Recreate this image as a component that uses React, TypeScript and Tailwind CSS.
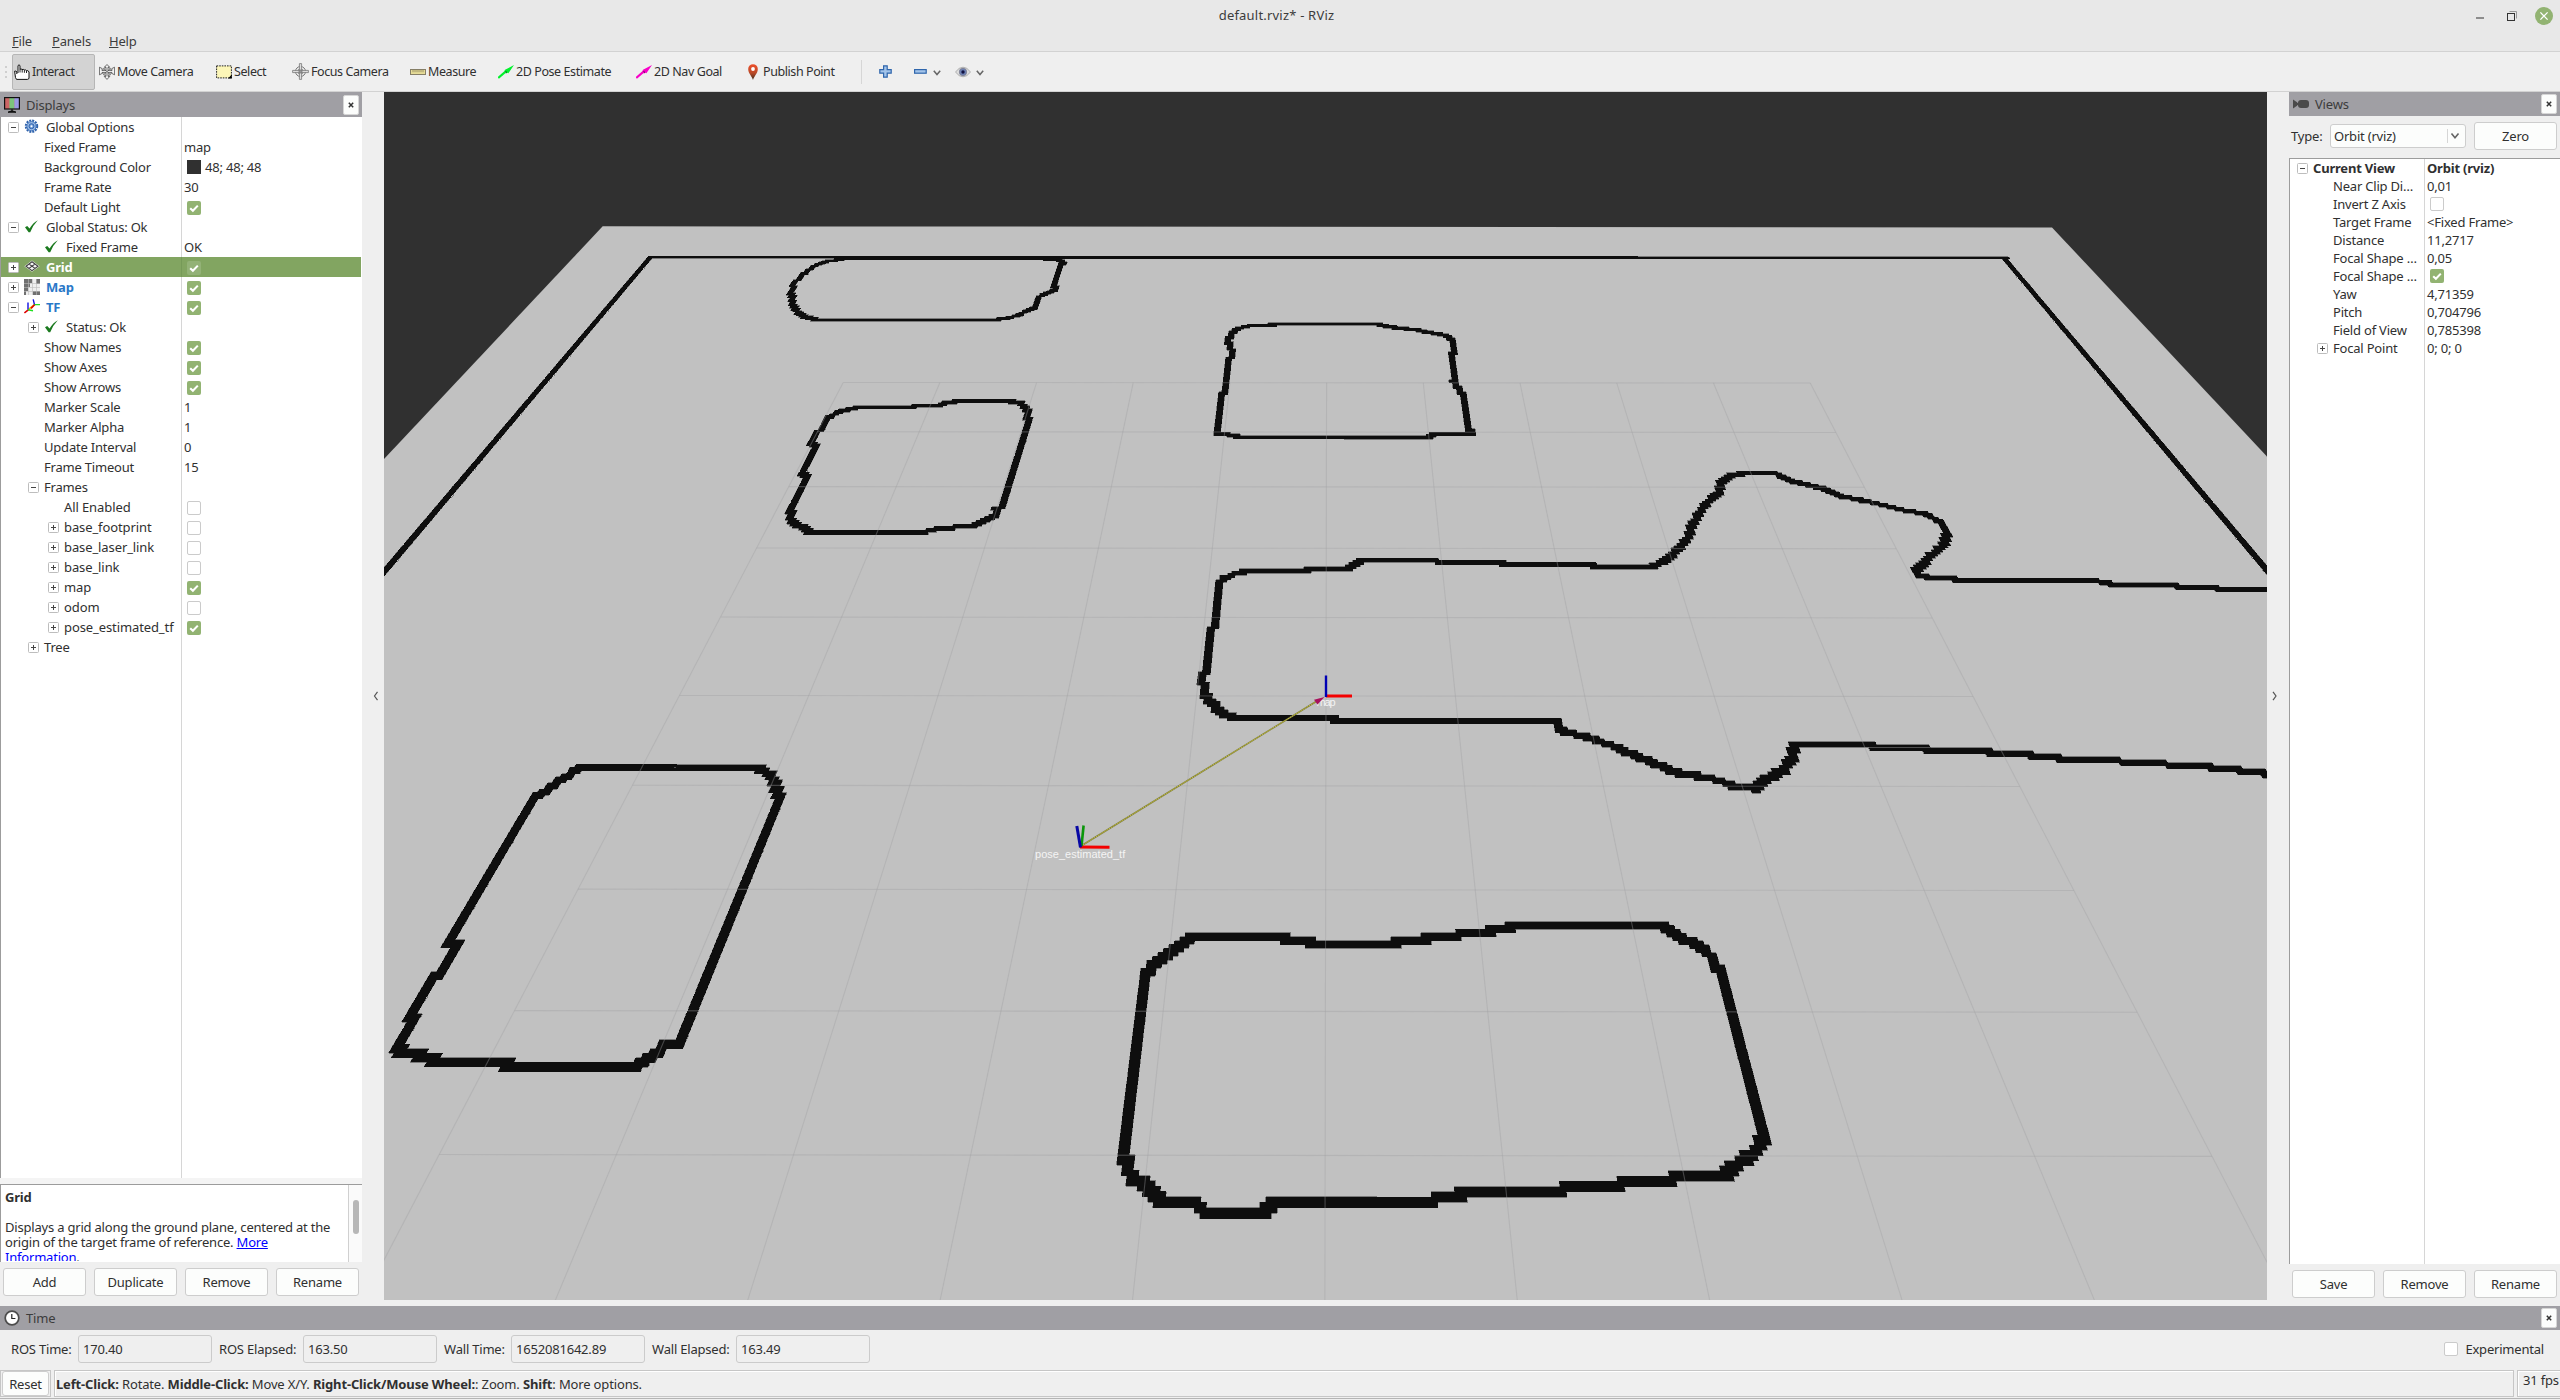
import React from "react";

type Pt = [number, number];

/* ---------- 3D scene ---------- */

const DIST = 11.2717;
const SIN = 0.6479;
const COS = 0.7617;
const FOCAL = 1458.2;
const YAW = 0.0012;
const CX = 1326;
const CY = 696;
const CELL = 0.0325;

function project(x: number, y: number): Pt {
  const yr = y - YAW * x;
  const xr = x + YAW * y;
  const z = DIST + COS * yr;
  return [CX + (FOCAL * xr) / z, CY - (FOCAL * SIN * yr) / z];
}

function unproject(px: number, py: number): Pt {
  const k = (CY - py) / FOCAL;
  const yr = (k * DIST) / (SIN - k * COS);
  const xr = ((px - CX) * (DIST + COS * yr)) / FOCAL;
  return [xr - YAW * yr, yr + YAW * xr];
}

interface Wall {
  o: Pt;
  s: Pt;
  pts: Pt[];
  plumb?: boolean;
}

const S7: Pt = [2.1778, 3];
const S8: Pt = [1.3067, 2.45];
const S11: Pt = [2.0632, 3];

const walls: Wall[] = [
  { o: [380, 210], s: S7, pts: [[587, 141], [3540, 142.5]] },
  { o: [380, 210], s: S7, pts: [[298, 612], [587, 141], [-40, 1163]], plumb: true },
  { o: [1100, 210], s: S8, pts: [[1354, 501], [1183, 117], [1560, 964]], plumb: true },
  {
    o: [380, 210],
    s: S7,
    pts: [[1003, 149], [975, 153], [945, 168], [920, 195], [905, 215], [893, 248], [898, 265], [897, 280], [905, 300], [922, 318], [955, 330], [1325, 330], [1365, 326], [1395, 312], [1425, 292], [1433, 262], [1468, 240], [1475, 200], [1478, 180], [1487, 160], [1480, 150], [1440, 146], [1003, 146]],
  },
  {
    o: [380, 210],
    s: S7,
    pts: [[1040, 593], [1160, 592], [1165, 588], [1215, 586], [1235, 578], [1262, 573], [1370, 573], [1395, 580], [1408, 595], [1411, 615], [1411, 640], [1355, 890], [1342, 895], [1338, 918], [1310, 938], [1285, 950], [1220, 954], [1190, 965], [1150, 970], [945, 970], [920, 953], [903, 940], [893, 925], [895, 900], [928, 800], [918, 790], [948, 705], [938, 700], [955, 665], [975, 625], [1000, 605], [1040, 593]],
  },
  {
    o: [1100, 210],
    s: S8,
    pts: [[225, 281], [365, 281], [375, 286], [415, 294], [440, 303], [455, 310], [463, 325], [463, 345], [460, 355], [462, 420], [470, 440], [478, 470], [481, 520], [485, 548], [435, 549], [430, 556], [180, 556], [175, 552], [155, 548], [165, 385], [173, 350], [168, 325], [170, 305], [180, 290], [195, 284], [225, 284]],
  },
  {
    o: [1100, 210],
    s: S8,
    pts: [[1560, 933], [1470, 932], [1450, 922], [1335, 921], [1305, 910], [1130, 908], [1105, 902], [1068, 898], [1065, 888], [1075, 868], [1085, 848], [1100, 825], [1107, 800], [1098, 765], [1080, 745], [1045, 733], [1005, 715], [970, 702], [940, 680], [905, 665], [880, 643], [845, 643], [825, 650], [812, 665], [808, 695], [790, 722], [780, 755], [772, 780], [768, 805], [755, 830], [745, 850], [728, 868], [715, 877], [648, 877], [645, 871], [530, 869], [525, 864], [445, 863], [440, 860], [340, 860], [320, 881], [210, 883], [180, 888], [160, 905], [153, 925], [153, 1010], [147, 1025], [141, 1120], [136, 1135], [134, 1180], [145, 1205], [160, 1235], [175, 1244], [303, 1244], [310, 1251], [598, 1251], [600, 1272], [640, 1295], [665, 1310], [710, 1345], [755, 1380], [800, 1392], [830, 1412], [855, 1418], [870, 1395], [895, 1370], [905, 1345], [908, 1308], [965, 1309], [1045, 1317], [1125, 1325], [1205, 1331], [1235, 1341], [1285, 1346], [1365, 1353], [1420, 1362], [1475, 1368], [1505, 1378], [1560, 1386]],
  },
  {
    o: [380, 740],
    s: [3, 3],
    pts: [[600, 81], [1130, 81], [1150, 90], [1170, 105], [1185, 125], [1190, 145], [1198, 168], [893, 918], [855, 917], [830, 938], [800, 955], [770, 975], [750, 983], [400, 983], [380, 970], [170, 970], [150, 950], [90, 942], [52, 930], [106, 837], [93, 837], [224, 616], [205, 616], [470, 165], [495, 155], [515, 140], [535, 122], [560, 108], [580, 92], [600, 81]],
  },
  {
    o: [1080, 900],
    s: S11,
    pts: [[230, 114], [445, 116], [450, 127], [497, 128], [500, 138], [650, 138], [655, 127], [705, 126], [715, 115], [745, 105], [845, 104], [850, 93], [885, 90], [890, 81], [1205, 81], [1220, 98], [1240, 115], [1270, 130], [1290, 150], [1305, 175], [1315, 205], [1328, 225], [1411, 690], [1410, 715], [1403, 738], [1390, 760], [1370, 780], [1345, 805], [1325, 829], [1225, 830], [1220, 844], [1120, 845], [1110, 859], [1000, 861], [990, 875], [785, 877], [775, 892], [735, 893], [725, 907], [400, 908], [390, 925], [375, 940], [260, 941], [250, 925], [235, 908], [165, 908], [155, 890], [140, 860], [130, 845], [110, 840], [97, 800], [92, 770], [138, 230], [145, 205], [165, 180], [185, 155], [210, 132], [230, 114]],
  },
];

/* Rasterises wall centrelines into occupied cells and merges each row into quads. */
function occupiedPath(): string {
  const rows = new Map<number, Set<number>>();
  const mark = (c: number, r: number) => {
    if (!rows.has(r)) rows.set(r, new Set());
    rows.get(r)!.add(c);
  };
  for (const w of walls) {
    const g = w.pts.map(([a, b]) => unproject(w.o[0] + a / w.s[0], w.o[1] + b / w.s[1]));
    if (w.plumb) g.forEach((p) => (p[0] = g[0][0]));
    for (let i = 1; i < g.length; i++) {
      const [x0, y0] = g[i - 1];
      const [x1, y1] = g[i];
      const n = Math.max(1, Math.ceil(Math.hypot(x1 - x0, y1 - y0) / (CELL / 3)));
      for (let k = 0; k <= n; k++) {
        const c = Math.round((x0 + ((x1 - x0) * k) / n) / CELL);
        const r = Math.round((y0 + ((y1 - y0) * k) / n) / CELL);
        mark(c, r);
        mark(c - 1, r);
        mark(c, r - 1);
        mark(c - 1, r - 1);
      }
    }
  }
  const f = (p: Pt) => p[0].toFixed(1) + " " + p[1].toFixed(1);
  let d = "";
  rows.forEach((set, r) => {
    const cs = Array.from(set).sort((a, b) => a - b);
    let start = cs[0];
    for (let i = 0; i < cs.length; i++) {
      if (cs[i + 1] !== cs[i] + 1) {
        const x0 = start * CELL;
        const x1 = (cs[i] + 1) * CELL;
        const y0 = r * CELL;
        const y1 = y0 + CELL;
        d += `M${f(project(x0, y0))}L${f(project(x1, y0))}L${f(project(x1, y1))}L${f(project(x0, y1))}Z`;
        start = cs[i + 1];
      }
    }
  });
  return d;
}

const wallPath = occupiedPath();

const gridLines = Array.from({ length: 11 }, (_, i) => i - 5).flatMap((v) => [
  [project(v, -5), project(v, 5)],
  [project(-5, v), project(5, v)],
]);

function Scene() {
  return (
    <svg viewBox="384 92 1883 1208" className="block h-[1208px] w-[1883px] shrink-0 bg-[#303030]">
      <polygon points="384,459 602.7,226.3 2052,227.4 2267,456.5 2267,1300 384,1300" fill="#c1c1c1" />
      <path d={wallPath} fill="#0e0e0e" stroke="#0e0e0e" strokeWidth="0.4" shapeRendering="crispEdges" />
      <g stroke="#a0a0a4" strokeOpacity="0.38" strokeWidth="1.1">
        {gridLines.map(([a, b], i) => (
          <line key={i} x1={a[0]} y1={a[1]} x2={b[0]} y2={b[1]} />
        ))}
      </g>
      <line x1="1081" y1="846" x2="1317" y2="701" stroke="#7d7c3c" strokeWidth="1.6" />
      <line x1="1081" y1="846" x2="1317" y2="701" stroke="#c8c23c" strokeWidth="1" strokeDasharray="1.5 1" />
      <g fontFamily="Liberation Sans, sans-serif" fontSize="11" fill="#f4f4f4">
        <text x="1316.5" y="706" textLength="19">map</text>
        <text x="1035" y="858" textLength="90">pose_estimated_tf</text>
      </g>
      <path d="M1324.5 697L1314 699.8L1317.5 704.6Z" fill="#a8125c" />
      <g strokeWidth="3">
        <path d="M1326 696H1352" stroke="#f40000" />
        <path d="M1326 697V675.5" stroke="#0000b4" strokeWidth="2.4" />
        <path d="M1080 847L1109.5 847.3" stroke="#f40000" />
        <path d="M1081.5 846L1083.6 825.5" stroke="#0a960a" strokeWidth="2.6" />
        <path d="M1080.5 847.5L1076.8 826" stroke="#0808a4" />
      </g>
    </svg>
  );
}

/* ---------- small controls ---------- */

function Check({ on, dim }: { on: boolean; dim?: boolean }) {
  if (!on) return <span className="h-[14px] w-[14px] rounded-[2px] border border-[#cbcbcb] bg-white" />;
  return (
    <span className={`flex h-[14px] w-[14px] items-center justify-center rounded-[2px] ${dim ? "bg-[#93b277]" : "bg-[#92b372]"}`}>
      <svg viewBox="0 0 14 14" className="h-[14px] w-[14px]">
        <path d="M3.2 7.2L5.9 9.8L10.8 4.6" fill="none" stroke="#fff" strokeWidth="2.1" />
      </svg>
    </span>
  );
}

function Expander({ open }: { open: boolean }) {
  return (
    <span className="flex h-[11px] w-[11px] items-center justify-center rounded-[1.5px] border border-[#bdbdbd] bg-white">
      <svg viewBox="0 0 9 9" className="h-[9px] w-[9px]" shapeRendering="crispEdges">
        <path d={open ? "M2 4.5H7" : "M2 4.5H7M4.5 2V7"} stroke="#444" strokeWidth="1" />
      </svg>
    </span>
  );
}

function PushButton({ children, className = "" }: { children: React.ReactNode; className?: string }) {
  return (
    <button className={`flex h-7 w-[83px] items-center justify-center rounded-[3px] border border-[#cdcdcd] bg-[#fcfdfc] ${className}`}>
      {children}
    </button>
  );
}

function CloseButton() {
  return (
    <button className="ml-auto mr-[3px] flex h-5 w-4 items-center justify-center rounded-[2px] border border-[#d6d6d6] bg-[#fcfdfc]">
      <svg viewBox="0 0 6 6" className="h-[6px] w-[6px]">
        <path d="M0.8 0.8L5.2 5.2M5.2 0.8L0.8 5.2" stroke="#333" strokeWidth="1.5" />
      </svg>
    </button>
  );
}

function Chevron({ className = "" }: { className?: string }) {
  return (
    <svg viewBox="0 0 8 6" className={`h-[6px] w-[8px] ${className}`}>
      <path d="M0.8 0.8L4 4.6L7.2 0.8" fill="none" stroke="#666" strokeWidth="1.5" />
    </svg>
  );
}

/* ---------- icons ---------- */

const ic = "h-4 w-4 shrink-0";

const HandIcon = () => (
  <svg viewBox="0 0 16 16" className={ic}>
    <path d="M4 9V1.6Q5 0 6 1.6V5.2Q7.2 4.4 8 5.6Q9.4 4.8 10.2 6Q11.6 5.4 12.3 6.6Q14 6.2 15 7.8V14.5L13.5 15.4H2.5L1.5 13.5L0.6 7.2Q2.2 6.4 2.8 8V10" fill="#fff" stroke="#111" strokeWidth="1" />
    <path d="M6 5V8.5M8.2 5.8V8.6M10.4 6.2V8.8M12.5 6.8V9" stroke="#111" strokeWidth="0.9" />
  </svg>
);
const MoveIcon = () => (
  <svg viewBox="0 0 16 16" className={ic} fill="#f2f2f2" stroke="#4a4a4a" strokeWidth="0.8">
    <circle cx="8" cy="7.6" r="4.4" fill="none" strokeWidth="0.7" />
    <path d="M8 0.5L10.6 3.2H9V6.6H13L12.8 4.6L15.6 3.2V10.8L12.8 9.4L13 8.6H9V12.4H10.8L8 15.4L5.2 12.4H7V8.6H3L3.2 9.4L0.4 10.8V3.2L3.2 4.6L3 6.6H7V3.2H5.4Z" />
    <path d="M4.4 4.4L11.6 10.8M11.6 4.4L4.4 10.8" fill="none" strokeWidth="0.7" />
  </svg>
);
const SelectIcon = () => (
  <svg viewBox="0 0 16 14" className="h-[14px] w-4 shrink-0">
    <rect x="0.6" y="0.9" width="14.8" height="12" fill="#fcf6b8" stroke="#222" strokeWidth="1" strokeDasharray="1.6 1" />
    <path d="M15.8 9.6V13.6H12Z" fill="#000" />
  </svg>
);
const FocusIcon = () => (
  <svg viewBox="0 0 17 17" className="h-[17px] w-[17px] shrink-0" fill="none" stroke="#777" strokeWidth="1">
    <circle cx="8.5" cy="8.5" r="5" />
    <circle cx="8.5" cy="8.5" r="2.6" />
    <path d="M7.4 0.6H9.6V7.4H16.4V9.6H9.6V16.4H7.4V9.6H0.6V7.4H7.4Z" fill="#ddd" strokeWidth="0.8" />
    <circle cx="8.5" cy="8.5" r="1.4" fill="#999" />
  </svg>
);
const MeasureIcon = () => (
  <svg viewBox="0 0 16 6" className="h-[6px] w-4 shrink-0">
    <rect x="0.5" y="0.5" width="15" height="5" fill="#e6dc98" stroke="#857e66" strokeWidth="1" />
    <path d="M3 1V3.2M5 1V3.2M7 1V3.2M9 1V3.2M11 1V3.2M13 1V3.2" stroke="#8a8058" strokeWidth="0.8" />
  </svg>
);
const ArrowIcon = ({ c, d }: { c: string; d: string }) => (
  <svg viewBox="0 0 16 14" className="h-[14px] w-4 shrink-0">
    <path d="M0.2 13L7 7.2" stroke={c} strokeWidth="2.2" />
    <path d="M16 0L10.4 8.2L8.6 7.4L8 8.6L6.2 6.6L7 4.8Z" fill={c} />
    <path d="M6.4 6.2L9 8.4L9 6.6Z" fill={d} />
  </svg>
);
const PinIcon = () => (
  <svg viewBox="0 0 16 16" className={ic}>
    <defs>
      <linearGradient id="pin" x1="0" y1="0" x2="0" y2="1">
        <stop offset="0" stopColor="#ee4f2c" />
        <stop offset="0.55" stopColor="#bb4a28" />
        <stop offset="1" stopColor="#3c2c1c" />
      </linearGradient>
    </defs>
    <path d="M8 16C7.2 12.4 3.2 9.6 3.2 5A4.8 4.8 0 0 1 12.8 5C12.8 9.6 8.8 12.4 8 16Z" fill="url(#pin)" />
    <circle cx="8" cy="5" r="1.9" fill="#fff" />
  </svg>
);
const PlusIcon = () => (
  <svg viewBox="0 0 13 13" className="h-[13px] w-[13px] shrink-0">
    <path d="M4.6 0.8H8.2V4.7H12.2V8.2H8.2V12.2H4.6V8.2H0.8V4.7H4.6Z" fill="#a3c4ea" stroke="#2f66ac" strokeWidth="1.2" />
  </svg>
);
const MinusIcon = () => (
  <svg viewBox="0 0 13 5" className="h-[5px] w-[13px] shrink-0">
    <rect x="0.6" y="0.6" width="11.6" height="3.6" fill="#a3c4ea" stroke="#2f66ac" strokeWidth="1.2" />
  </svg>
);
const EyeIcon = () => (
  <svg viewBox="0 0 16 12" className="h-3 w-4 shrink-0">
    <path d="M0.5 6Q4 1.2 8 1.2T15.5 6Q12 10.8 8 10.8T0.5 6Z" fill="#dedede" stroke="#a8a8a8" strokeWidth="0.9" />
    <circle cx="8" cy="6" r="3.7" fill="#6c80b4" stroke="#7d7d8c" strokeWidth="0.8" />
    <circle cx="8" cy="6" r="1.7" fill="#101040" />
  </svg>
);
const DisplaysIcon = () => (
  <svg viewBox="0 0 16 16" className={ic}>
    <rect x="0.6" y="0.6" width="14.8" height="11.4" fill="#c66" />
    <rect x="5.4" y="1" width="5" height="11" fill="#7cc47c" />
    <rect x="10.4" y="1" width="4.8" height="11" fill="#9a9ae4" />
    <rect x="0.6" y="0.6" width="14.8" height="11.4" fill="none" stroke="#111" strokeWidth="1.2" />
    <path d="M8 12V14M4 15.2Q8 12.4 12 15.2Z" stroke="#111" fill="#111" />
  </svg>
);
const GearIcon = () => (
  <svg viewBox="0 0 16 16" className={ic}>
    <circle cx="7.5" cy="7.2" r="5.7" fill="none" stroke="#2f62ac" strokeWidth="2" strokeDasharray="2 0.985" />
    <circle cx="7.5" cy="7.2" r="4.6" fill="#9cbde8" stroke="#3c70b8" strokeWidth="1" />
    <circle cx="7.5" cy="7.2" r="2.5" fill="#6f9cd8" stroke="#2f62ac" strokeWidth="1" />
    <circle cx="7.5" cy="7.2" r="1" fill="#fff" />
  </svg>
);
const TickIcon = () => (
  <svg viewBox="0 0 16 16" className={ic}>
    <path d="M1 8.2L3.2 7L5.6 9.6Q9 3.6 13.8 1.2Q8.6 6.6 6.2 13.2L4.6 13.2Z" fill="#1b7a1f" />
  </svg>
);
const GridIcon = () => (
  <svg viewBox="0 0 16 16" className={ic}>
    <path d="M8 1.6L15.6 7.2L8 12.8L0.4 7.2Z" fill="#f8f8f8" />
    <path d="M8 2.8L14 7.2L8 11.6L2 7.2ZM5 5L11 9.4M11 5L5 9.4" fill="none" stroke="#3f3f3f" strokeWidth="1.1" />
  </svg>
);
const MapIcon = () => (
  <svg viewBox="0 0 16 16" className={ic} shapeRendering="crispEdges">
    <rect width="16" height="16" fill="#eee" />
    <path d="M0 0H8V4H6V8H4V12H2V16H0ZM12 0H16V5H12ZM9 12H16V16H9Z" fill="#707070" />
    <path d="M4 0V16M8 0V16M12 0V16M0 4H16M0 8H16M0 12H16" stroke="#bbb" strokeWidth="0.6" />
  </svg>
);
const TfIcon = () => (
  <svg viewBox="0 0 16 16" className={ic} fill="none" strokeWidth="1.4">
    <path d="M4.6 10.4L10.8 5.4" stroke="#f0c000" strokeWidth="1.8" />
    <path d="M0.4 14L4.6 10.6M7 9.4L11 5.2" stroke="#e00000" strokeWidth="1.6" />
    <path d="M4 10.6V3.6M10.4 5.4L9.2 0.4" stroke="#1010e0" />
    <path d="M4 10.8L9 11.8M10.6 5.6H16" stroke="#20e020" />
  </svg>
);
const CameraIcon = () => (
  <svg viewBox="0 0 16 10" className="h-[10px] w-4 shrink-0" fill="#4a4a4a">
    <path d="M0 0.6L4.4 3.4V6.6L0 9.4Z" />
    <rect x="5" y="1" width="11" height="8" rx="3" />
    <rect x="3" y="4" width="4" height="2" />
  </svg>
);
const ClockIcon = () => (
  <svg viewBox="0 0 16 16" className={ic}>
    <circle cx="8" cy="8" r="6.8" fill="#fff" stroke="#4c4c4c" strokeWidth="1.7" />
    <path d="M7.8 4V8.5H11.4" fill="none" stroke="#222" strokeWidth="1.2" />
  </svg>
);

/* ---------- toolbar ---------- */

const tools: { label: string; icon: React.ReactNode; w: string; cls?: string }[] = [
  { label: "Interact", icon: <HandIcon />, w: "w-[83px] mr-[2px]", cls: "bg-[#d3d3d3] border-[#b6b6b6]" },
  { label: "Move Camera", icon: <MoveIcon />, w: "w-[117px]" },
  { label: "Select", icon: <SelectIcon />, w: "w-[76px]" },
  { label: "Focus Camera", icon: <FocusIcon />, w: "w-[118px]" },
  { label: "Measure", icon: <MeasureIcon />, w: "w-[88px]" },
  { label: "2D Pose Estimate", icon: <ArrowIcon c="#00f22c" d="#0a7a1c" />, w: "w-[138px]" },
  { label: "2D Nav Goal", icon: <ArrowIcon c="#f800c8" d="#8a0070" />, w: "w-[109px]" },
  { label: "Publish Point", icon: <PinIcon />, w: "w-[118px]" },
];

function Toolbar() {
  return (
    <div className="flex h-10 items-center border-b border-[#d2d2d2] bg-[#efefef] text-[12.5px] tracking-[-0.42px]">
      <div className="flex w-3 flex-col items-center gap-[3px]">
        <i className="h-[2px] w-[2px] bg-[#cfcfcf]" />
        <i className="h-[2px] w-[2px] bg-[#cfcfcf]" />
        <i className="h-[2px] w-[2px] bg-[#cfcfcf]" />
      </div>
      {tools.map((t) => (
        <button key={t.label} className={`flex h-9 shrink-0 items-center gap-[2px] rounded-[2px] border pl-px ${t.cls ?? "border-transparent"} ${t.w}`}>
          {t.icon}
          {t.label}
        </button>
      ))}
      <div className="h-6 w-px bg-[#d6d6d6]" />
      <div className="ml-[17px] flex items-center">
        <PlusIcon />
        <span className="w-[22px]" />
        <MinusIcon />
        <Chevron className="ml-[6px] mt-[3px]" />
        <span className="w-[14px]" />
        <EyeIcon />
        <Chevron className="ml-[5px] mt-[3px]" />
      </div>
    </div>
  );
}

/* ---------- displays panel ---------- */

interface Row {
  name: string;
  lvl: number;
  exp?: "open" | "closed";
  icon?: React.ReactNode;
  value?: string;
  check?: boolean;
  swatch?: boolean;
  blue?: boolean;
  selected?: boolean;
}

const rows: Row[] = [
  { name: "Global Options", lvl: 0, exp: "open", icon: <GearIcon /> },
  { name: "Fixed Frame", lvl: 1, value: "map" },
  { name: "Background Color", lvl: 1, value: "48; 48; 48", swatch: true },
  { name: "Frame Rate", lvl: 1, value: "30" },
  { name: "Default Light", lvl: 1, check: true },
  { name: "Global Status: Ok", lvl: 0, exp: "open", icon: <TickIcon /> },
  { name: "Fixed Frame", lvl: 1, icon: <TickIcon />, value: "OK" },
  { name: "Grid", lvl: 0, exp: "closed", icon: <GridIcon />, check: true, selected: true },
  { name: "Map", lvl: 0, exp: "closed", icon: <MapIcon />, check: true, blue: true },
  { name: "TF", lvl: 0, exp: "open", icon: <TfIcon />, check: true, blue: true },
  { name: "Status: Ok", lvl: 1, exp: "closed", icon: <TickIcon /> },
  { name: "Show Names", lvl: 1, check: true },
  { name: "Show Axes", lvl: 1, check: true },
  { name: "Show Arrows", lvl: 1, check: true },
  { name: "Marker Scale", lvl: 1, value: "1" },
  { name: "Marker Alpha", lvl: 1, value: "1" },
  { name: "Update Interval", lvl: 1, value: "0" },
  { name: "Frame Timeout", lvl: 1, value: "15" },
  { name: "Frames", lvl: 1, exp: "open" },
  { name: "All Enabled", lvl: 2, check: false },
  { name: "base_footprint", lvl: 2, exp: "closed", check: false },
  { name: "base_laser_link", lvl: 2, exp: "closed", check: false },
  { name: "base_link", lvl: 2, exp: "closed", check: false },
  { name: "map", lvl: 2, exp: "closed", check: true },
  { name: "odom", lvl: 2, exp: "closed", check: false },
  { name: "pose_estimated_tf", lvl: 2, exp: "closed", check: true },
  { name: "Tree", lvl: 1, exp: "closed" },
];

const indent = ["pl-[7px]", "pl-[27px]", "pl-[47px]"];

function TreeRow({ r }: { r: Row }) {
  const tone = r.selected ? "bg-[#82a561] text-white font-bold" : r.blue ? "text-[#2a78c8] font-bold" : "";
  return (
    <div className={`flex h-5 ${tone}`}>
      <div className={`flex w-[180px] shrink-0 items-center overflow-hidden whitespace-nowrap ${indent[r.lvl]} ${r.lvl === 2 ? "tracking-[-0.1px]" : ""}`}>
        <span className="flex w-4 shrink-0">{r.exp && <Expander open={r.exp === "open"} />}</span>
        {r.icon ? <span className="mr-[6px] shrink-0">{r.icon}</span> : null}
        {r.name}
      </div>
      <div className={`flex flex-1 items-center border-l pl-[2px] ${r.selected ? "border-[#769a58]" : "border-[#d6d6d6]"}`}>
        {r.swatch && <span className="ml-[3px] mr-1 h-[14px] w-[14px] bg-[#303030]" />}
        {r.check !== undefined && <span className="ml-[3px] mt-px flex"><Check on={r.check} dim={r.selected} /></span>}
        {r.value}
      </div>
    </div>
  );
}

function DisplaysPanel() {
  return (
    <div className="flex w-[362px] shrink-0 flex-col">
      <div className="flex h-[25px] items-center bg-[#a09fa4] pl-1 text-[#3c3c3c]">
        <DisplaysIcon />
        <span className="ml-[6px]">Displays</span>
        <CloseButton />
      </div>
      <div className="flex h-[1061px] flex-col border-l border-[#9c9c9c] bg-white pr-px">
        {rows.map((r, i) => (
          <TreeRow key={i} r={r} />
        ))}
        <div className="ml-[180px] flex-1 border-l border-[#d6d6d6]" />
      </div>
      <div className="h-[6px] bg-[#f4f4f4]" />
      <div className="flex h-[78px] overflow-hidden border-l border-t border-[#9c9c9c] bg-white">
        <div className="w-[347px] overflow-hidden border-b border-white pl-1 pt-[5px] leading-[15px]">
          <div className="font-bold">Grid</div>
          <div className="mt-[15px] whitespace-nowrap">
            Displays a grid along the ground plane, centered at the
            <br />
            origin of the target frame of reference. <a className="text-[#0000ff] underline">More</a>
            <br />
            <a className="text-[#0000ff] underline">Information</a>.
          </div>
        </div>
        <div className="flex flex-1 justify-center border-l border-[#d0d0d0] bg-[#fafafa] pt-[15px]">
          <div className="h-[34px] w-[6px] rounded-full bg-[#b7b7b7]" />
        </div>
      </div>
      <div className="flex gap-2 pl-[3px] pt-[6px]">
        <PushButton>Add</PushButton>
        <PushButton>Duplicate</PushButton>
        <PushButton>Remove</PushButton>
        <PushButton>Rename</PushButton>
      </div>
    </div>
  );
}

/* ---------- views panel ---------- */

const viewRows: { name: string; value?: string; check?: boolean; exp?: boolean }[] = [
  { name: "Near Clip Di…", value: "0,01" },
  { name: "Invert Z Axis", check: false },
  { name: "Target Frame", value: "<Fixed Frame>" },
  { name: "Distance", value: "11,2717" },
  { name: "Focal Shape …", value: "0,05" },
  { name: "Focal Shape …", check: true },
  { name: "Yaw", value: "4,71359" },
  { name: "Pitch", value: "0,704796" },
  { name: "Field of View", value: "0,785398" },
  { name: "Focal Point", value: "0; 0; 0", exp: true },
];

function ViewsPanel() {
  return (
    <div className="flex w-[271px] shrink-0 flex-col">
      <div className="flex h-6 items-center bg-[#a09fa4] pl-1 text-[#3c3c3c]">
        <CameraIcon />
        <span className="ml-[6px]">Views</span>
        <CloseButton />
      </div>
      <div className="flex h-[42px] items-center pb-[2px] pl-[2px]">
        <span className="w-[39px]">Type:</span>
        <div className="flex h-6 w-[136px] items-center rounded-[3px] border border-[#cdcdcd] bg-[#fcfdfc] pl-[3px]">
          Orbit (rviz)
          <span className="ml-auto mr-[3px] h-[14px] w-px bg-[#d6d6d6]" />
          <Chevron className="mr-[6px] scale-110" />
        </div>
        <PushButton className="ml-2">Zero</PushButton>
      </div>
      <div className="flex h-[1106px] flex-col border-l border-t border-[#9c9c9c] bg-white">
        <div className="flex h-[18px] shrink-0 font-bold">
          <div className="flex w-[134px] items-center gap-[5px] pl-[7px]">
            <Expander open />
            Current View
          </div>
          <div className="flex flex-1 items-center border-l border-[#d6d6d6] pl-[2px]">Orbit (rviz)</div>
        </div>
        {viewRows.map((r, i) => (
          <div key={i} className="flex h-[18px] shrink-0">
            <div className="flex w-[134px] items-center whitespace-nowrap pl-[27px]">
              <span className="flex w-4 shrink-0">{r.exp && <Expander open={false} />}</span>
              {r.name}
            </div>
            <div className="flex flex-1 items-center border-l border-[#d6d6d6] pl-[2px]">
              {r.check !== undefined && <span className="ml-[3px] flex"><Check on={r.check} /></span>}
              {r.value}
            </div>
          </div>
        ))}
        <div className="ml-[134px] flex-1 border-l border-[#d6d6d6]" />
      </div>
      <div className="flex gap-2 pl-[3px] pt-[6px]">
        <PushButton>Save</PushButton>
        <PushButton>Remove</PushButton>
        <PushButton>Rename</PushButton>
      </div>
    </div>
  );
}

/* ---------- bottom ---------- */

const times = [
  { label: "ROS Time:", value: "170.40", w: "w-[67px]" },
  { label: "ROS Elapsed:", value: "163.50", w: "w-[84px]" },
  { label: "Wall Time:", value: "1652081642.89", w: "w-[67px]" },
  { label: "Wall Elapsed:", value: "163.49", w: "w-[84px]" },
];

function Gutter({ d, pad }: { d: string; pad: string }) {
  return (
    <div className={`flex w-[22px] shrink-0 items-center justify-center ${pad}`}>
      <svg viewBox="0 0 6 10" className="h-[10px] w-[6px] shrink-0">
        <path d={d} fill="none" stroke="#555" strokeWidth="1.2" />
      </svg>
    </div>
  );
}

export default function App() {
  return (
    <div className="flex h-[1400px] w-[2560px] flex-col overflow-hidden bg-[#efefef] font-['Noto_Sans',sans-serif] text-[13px] leading-[18px] tracking-[-0.2px] text-[#303030]">
      <div className="flex h-[31px] items-center bg-[#e8e8e8]">
        <div className="flex-1" />
        <div className="pb-[2px] tracking-[0.2px] text-[#3c3c3c]">default.rviz* - RViz</div>
        <div className="flex flex-1 items-center justify-end pr-[7px]">
          <svg viewBox="0 0 8 10" className="mr-[23px] h-[10px] w-[8px]"><path d="M0 7H8" stroke="#333" /></svg>
          <svg viewBox="0 0 10 10" className="mr-[18px] h-[10px] w-[10px]" fill="none">
            <path d="M2.5 0.5H9.5V7.5" stroke="#999" />
            <rect x="0.5" y="2.5" width="7" height="7" stroke="#333" />
          </svg>
          <svg viewBox="0 0 18 18" className="h-[18px] w-[18px]">
            <circle cx="9" cy="9" r="9" fill="#92b372" />
            <path d="M5.4 5.4L12.6 12.6M12.6 5.4L5.4 12.6" stroke="#fff" strokeWidth="1.3" />
          </svg>
        </div>
      </div>
      <div className="flex h-[21px] items-center border-b border-[#d2d2d2] bg-[#e8e8e8] pl-3 text-[#3c3c3c]">
        <span className="w-10"><u>F</u>ile</span>
        <span className="w-[57px]"><u>P</u>anels</span>
        <span><u>H</u>elp</span>
      </div>
      <Toolbar />

      <div className="flex h-[1208px]">
        <DisplaysPanel />
        <Gutter d="M4.5 0.8L1.5 5L4.5 9.2" pad="pl-[6px]" />
        <Scene />
        <Gutter d="M1 0.8L4 5L1 9.2" pad="pr-[6px]" />
        <ViewsPanel />
      </div>

      <div className="mt-[6px] flex h-6 items-center bg-[#a09fa4] pl-1 text-[#3c3c3c]">
        <ClockIcon />
        <span className="ml-[6px]">Time</span>
        <CloseButton />
      </div>
      <div className="flex h-[38px] items-center pl-[11px]">
        {times.map((t) => (
          <div key={t.label} className="flex items-center">
            <span className={t.w}>{t.label}</span>
            <div className="mr-[7px] flex h-7 w-[134px] items-center rounded-[3px] border border-[#cbcbcb] pl-1">{t.value}</div>
          </div>
        ))}
        <div className="ml-auto mr-4 flex items-center gap-[7px]">
          <Check on={false} />
          Experimental
        </div>
      </div>
      <div className="mt-[2px] flex h-[29px] items-start border-b border-[#b4b4b4]">
        <div className="flex h-[27px] w-[51px] items-center justify-center border border-[#c6c6c6]">
          <button className="flex h-[25px] w-[47px] items-center justify-center rounded-[3px] border border-[#cdcdcd] bg-[#fcfdfc]">Reset</button>
        </div>
        <div className="ml-[3px] flex h-[27px] w-[2460px] items-center border border-[#c6c6c6] pl-px tracking-[-0.15px] shadow-[inset_1px_1px_0_#fff]">
          <span>
            <b>Left-Click:</b> Rotate. <b>Middle-Click:</b> Move X/Y. <b>Right-Click/Mouse Wheel:</b>: Zoom. <b>Shift</b>: More options.
          </span>
        </div>
        <div className="ml-[3px] h-[27px] flex-1 overflow-hidden whitespace-nowrap border border-r-0 border-[#c6c6c6] pl-[5px] shadow-[inset_1px_1px_0_#fff]">31 fps</div>
      </div>
    </div>
  );
}
